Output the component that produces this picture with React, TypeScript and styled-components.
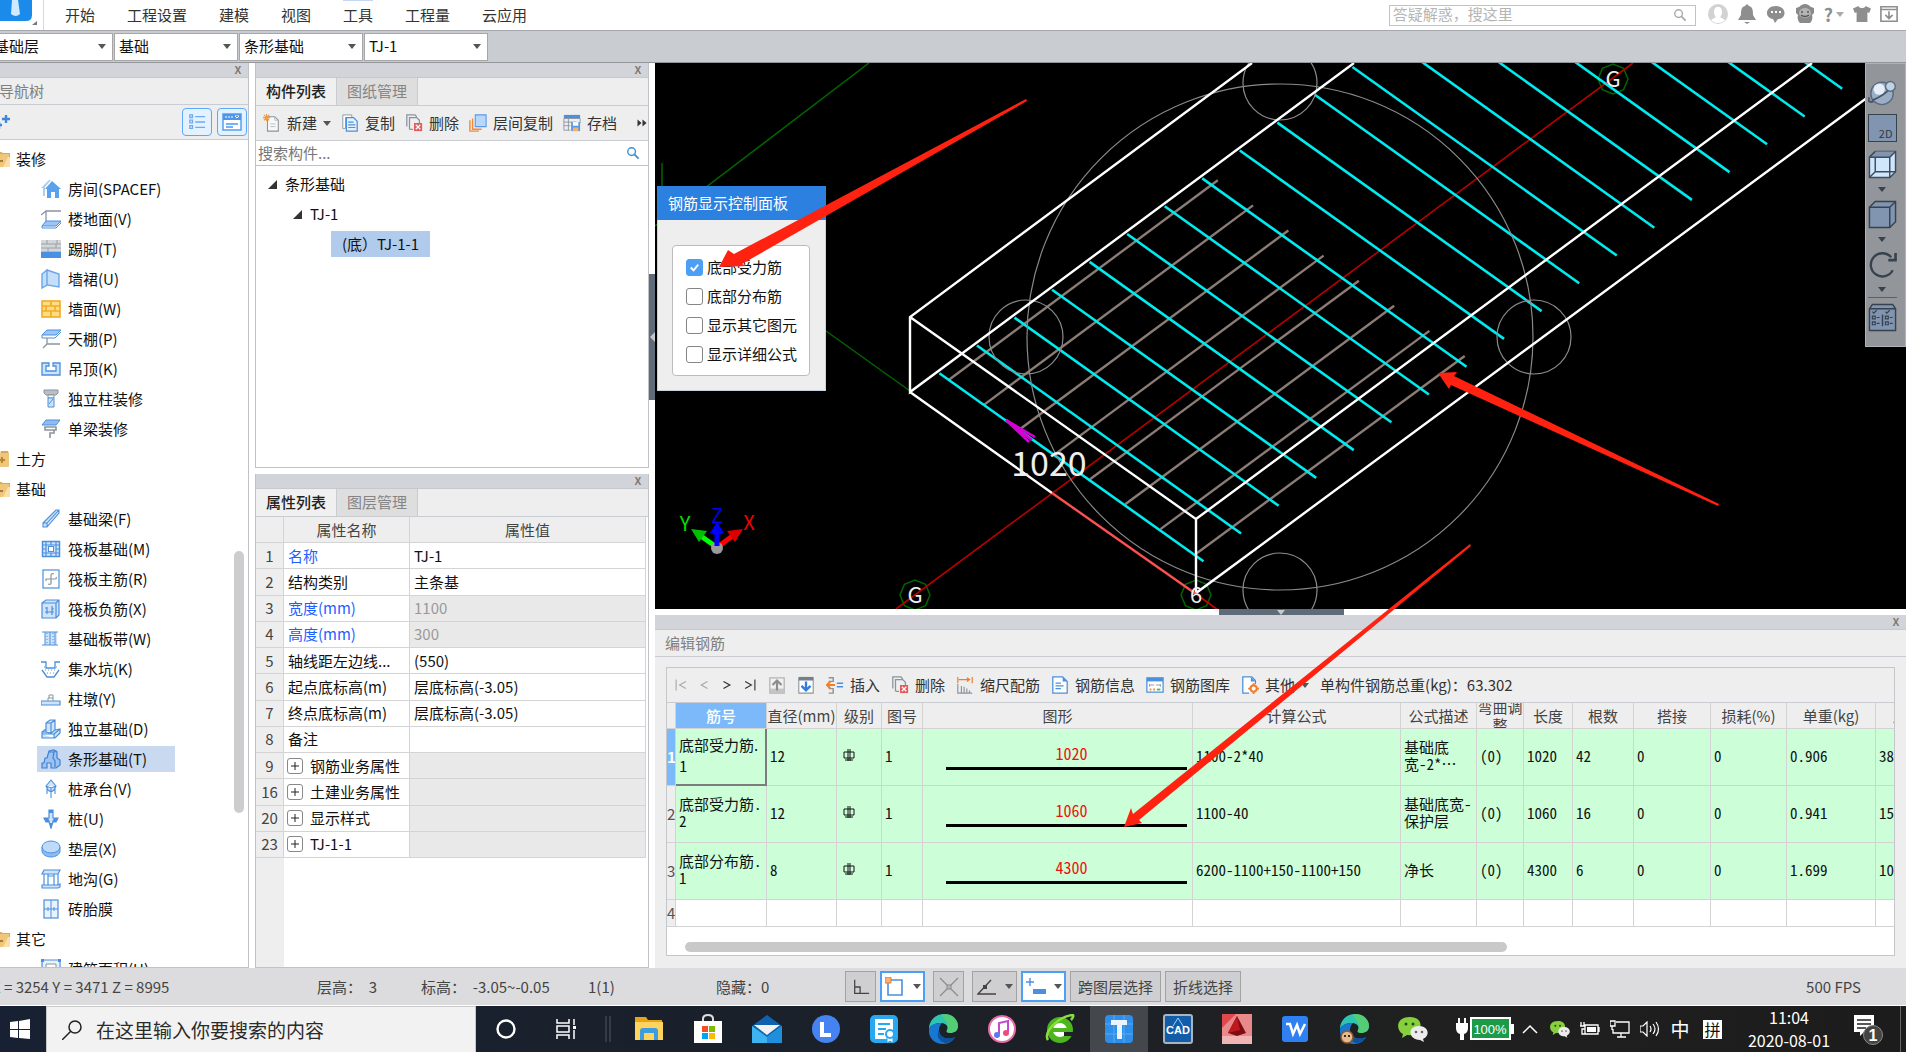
import React from "react";
import styled, { createGlobalStyle, css } from "styled-components";

const Global = createGlobalStyle`
  * { box-sizing: border-box; }
  html, body { margin: 0; padding: 0; }
  body {
    overflow: hidden;
    background: #fff;
    color: #111;
    font-family: "Noto Sans CJK SC", "Noto Sans", sans-serif;
    font-size: 15px;
    line-height: 20px;
  }
  button, input, select { font: inherit; color: inherit; margin: 0; }
  button { border: 0; padding: 0; background: none; }
  svg { display: block; flex: none; }
`;

/* ---------- icons ---------- */

const B = "#4a90dc";
const L = "#cfe3fa";
const G = "#8a949e";

const glyphs: Record<string, React.ReactNode> = {
  folderOpen: <><path d="M1 3h9l2 1h7v4H1z" fill="#d9a95a" /><path d="M1 18V5h17v13z" fill="#f0c67d" /><path d="M12 18l5-10h2v10z" fill="#fbdfa8" /><path d="M8 11h4v2H8z" fill="#a87a35" /></>,
  folderShut: <><path d="M10 2h7l1 3h-9z" fill="#d9a95a" /><rect x="1" y="4" width="17" height="14" rx="1" fill="#f0c67d" /><path d="M8 11h6M11 8v6" stroke="#b98431" strokeWidth="2" /></>,
  house: <><path d="M4 10l7-8 9 8h-2v9h-4v-6h-4v6H6v-9z" fill="#5ba2ee" /><path d="M0 9l8-8h2L4 8v9H2V9z" fill="#a9cdf6" /></>,
  floor: <><path d="M5 12V2h15M5 2L0 6" stroke={G} strokeWidth="1.3" fill="none" /><path d="M5 12h15l-5 5H1z" fill="#9cc6f5" stroke={B} /><path d="M1 17v2h14l5-5v-2" fill="none" stroke={B} /></>,
  skirting: <><rect y="1" width="20" height="13" fill="#d4d7d9" /><path d="M0 5h20M0 9h20M0 13h20M6 1v4M15 5v4M7 9v4M16 1v4" stroke="#9aa0a5" /><rect y="13" width="20" height="6" fill="#4a8fe2" /></>,
  dado: <path d="M1 5l5-4v15l-5 3zM6 1l12 4v13L6 16z" fill="#c5def9" stroke="#6aa6ea" strokeWidth="1.4" />,
  brick: <><rect x="1" y="2" width="18" height="16" fill="#ffdc86" stroke="#f4ab22" strokeWidth="1.6" /><path d="M1 7h18M1 12h18M10 2v5M5 7v5M14 7v5M10 12v6" stroke="#f4ab22" strokeWidth="1.6" /></>,
  canopy: <><path d="M6 1h14l-5 5H1z" fill="#9cc6f5" stroke={B} /><path d="M1 6v3h13l6-6" fill="none" stroke={B} /><path d="M6 9v6h13M6 15l-4 4" fill="none" stroke={G} strokeWidth="1.3" /></>,
  hanging: <path d="M1 4h7v3H5v5h10V7h-3V4h7v12H1z" fill={L} stroke={B} strokeWidth="1.3" />,
  column: <><path d="M3 1h14v3l-2 2H5L3 4z" fill="#b9bfc5" stroke={G} /><path d="M7 6h6v3H7z" fill="#fff" stroke={G} /><path d="M7 9h6v9H7z" fill={L} stroke={B} /><path d="M8 15l4-5" stroke={B} /></>,
  beam: <><path d="M5 1h14l-4 5H1z" fill="#8fbdf2" stroke={B} /><path d="M4 8h11v3H4zM13 11v3H9v5" fill="none" stroke={G} strokeWidth="1.6" /></>,
  foundBeam: <path d="M2 14L15 1h3v3L6 18H2zM2 14h4v4M6 14L18 1" fill={L} stroke={B} strokeWidth="1.1" />,
  raft: <><rect x="1.500" y="2.500" width="17" height="15" fill={L} stroke={B} strokeWidth="1.500" /><path d="M5 2v16M15 2v16M1 6h18M1 14h18M10 2v4M10 14v4M1 10h4M15 10h4" stroke={B} strokeWidth="1.200" /><rect x="7.500" y="7.500" width="5" height="5" fill="#fff" stroke={B} /></>,
  raftMain: <><rect x="2" y="1" width="16" height="18" fill="#fff" stroke={B} strokeWidth="1.200" /><path d="M10 15V6q0-2 3-1M5 12v-2h9q2 0 1-2M10 14q0 2-3 1" fill="none" stroke={G} strokeWidth="1.200" /></>,
  raftNeg: <><path d="M1 4h14v15H1zM1 4l4-3h13v15l-3 3M15 4l3-3" fill={L} stroke={B} strokeWidth="1.200" /><path d="M6 8v7M11 7v9M4 13h9M4 9h2M11 10h2" stroke={B} strokeWidth="1.200" /></>,
  strip: <><rect x="4" y="3" width="12" height="13" fill={L} /><path d="M1 3h16M1 16h16M4 3v13M14 3v13M9 3v13" stroke={B} /><path d="M6 4v12M12 4v12" stroke={B} strokeDasharray="1 2" /></>,
  sump: <><path d="M0 3h5v6h9V3h5" fill="none" stroke={B} strokeWidth="1.300" /><path d="M1 11l5 7h7l5-7" fill="none" stroke={B} strokeWidth="1.300" /><path d="M3 8h1M15 8h2M4 11h12M6 14h8" stroke={G} strokeDasharray="1 2" /></>,
  pier: <><path d="M0 12h19v4H0z" fill={L} stroke={B} strokeWidth="1.200" /><path d="M7 12V9h5v3M8 9V6h4v3" fill="none" stroke={G} /></>,
  isolated: <path d="M5 13V4l4-3h5v10l-4 3zM1 13h4v-3l-4 3v6h13l5-5v-4l-5 1M1 15h12v4M13 15l6-5M5 4h5v10M10 4l4-3" fill={L} stroke={B} strokeWidth="1.200" />,
  stripFound: <path d="M1 19v-5h2l1-5h2l2-7 5-1 3 2v6l3 2v5l-4 3h-5v-5H6v5zM8 3h5l-1 6 2 3v6M13 3l3-1" fill="#9cc3f2" stroke="#3f82d0" strokeWidth="1.200" />,
  pileCap: <path d="M10 1l5 6-2 4-3 2-3-2-2-4zM10 13v6M6 9v6M14 9v6M5 7l5 2 5-2M10 9v4" fill={L} stroke={B} strokeWidth="1.100" />,
  pile: <><path d="M8 1h4v8h5l-2 4h-3l-2 6-2-6H5L3 9h5z" fill={L} stroke={B} strokeWidth="1.200" /><path d="M3 9h4l2 4H5zM17 9h-4l-2 4h4zM8 1h4v3H8zM9 14h2v5H9z" fill={B} /></>,
  cushion: <><path d="M1 8v4c0 3 4 6 9 6s9-3 9-6V8" fill="#8ebcf1" stroke={B} /><ellipse cx="10" cy="8" rx="9" ry="6" fill="#bddaf8" stroke={B} /></>,
  trench: <path d="M3 1h16l-2 4H1zM3 5v11M7 5v11M13 5v11M17 5v11M1 16h16l2-1v3l-2 1H1zM7 7h6" fill={L} stroke={B} strokeWidth="1.200" />,
  brickForm: <><rect x="3" y="1" width="14" height="18" fill="#eaf3fd" stroke={B} strokeWidth="1.200" /><path d="M3 10h14M10 1v18M7 8v4M13 8v4" stroke={B} /></>,
  area: <><path d="M1 1h18v18H1z" fill="#eaf3fd" stroke={B} strokeWidth="1.200" /><path d="M5 5h10v12H5z" fill="#fff" stroke={G} /><path d="M0 0h3v3H0zM17 0h3v3h-3z" fill={B} /></>,
  sparkle: <path d="M15 3v8M11 7h8M8 10v7M5 13h6" stroke="#3f87dc" strokeWidth="2.400" />,
  listView: <path d="M2 2h3v3H2zM2 8h3v3H2zM2 14h3v3H2zM8 4h11M8 10h11M8 16h11" fill="none" stroke="#6babf3" strokeWidth="1.400" />,
  cardView: <><rect x="1" y="2" width="18" height="16" fill="#fff" stroke="#4a98ee" strokeWidth="1.400" /><path d="M1 2h18v6H1z" fill="#4a98ee" /><path d="M4 4v2M7 4v2M10 4v2M13 4h4l-2 2z" stroke="#fff" /><path d="M4 12h12M4 15h7" stroke="#4a98ee" strokeWidth="1.400" /></>,
  newDoc: <><path d="M5 3h8l4 4v12H5z" fill="#f8f8f8" stroke={G} strokeWidth="1.200" /><path d="M13 3v4h4M8 11h6M8 14h6" fill="none" stroke="#b8bec4" /><path d="M4 0v8M0 4h8M1 1l6 6M7 1L1 7" stroke="#f29a37" strokeWidth="1.300" /></>,
  copy: <><path d="M2 1h10v3H5v12H2z" fill="#fff" stroke={G} /><path d="M6 4h8l4 4v11H6z" fill="#e8f2fd" stroke={B} strokeWidth="1.400" /><path d="M8 9h6M8 12h8M8 15h8" stroke={B} strokeWidth="1.300" /></>,
  remove: <><path d="M2 14V1h9l2 2M5 17V4h8l3 3v3M5 17h4" fill="none" stroke={G} strokeWidth="1.400" /><path d="M10 10h9v9h-9z" fill="#e25a5a" /><path d="M12 12l5 5M17 12l-5 5" stroke="#fff" strokeWidth="1.400" /></>,
  layers: <><path d="M7 1h12v13H7z" fill="#b9d6fb" stroke="#5b9ae6" strokeWidth="1.200" /><path d="M4 5v12h10M1 7v12h10" fill="none" stroke="#f08a3c" strokeWidth="1.600" /></>,
  archive: <><path d="M1 1h18v4H1z" fill={B} /><path d="M1 5h18v5M1 5v13h7M6 5v13M1 9h14M1 13h7" fill="none" stroke={G} /><path d="M9 9h10v10H9z" fill="#5b9ae6" /><path d="M11 9h6v4h-6z" fill="#fff" /><path d="M11 15h6v4h-6z" fill="#f6b26b" /></>,
  search: <><circle cx="8" cy="8" r="5.500" fill="none" stroke="currentColor" strokeWidth="2" /><path d="M12 12l6 6" stroke="currentColor" strokeWidth="2.600" /></>,
  more: <path d="M1 3l8 7-8 7zM11 3l8 7-8 7z" fill="#333" />,
  first: <path d="M3 2v16M17 5l-9 5 9 5" fill="none" stroke="#a9a9a9" strokeWidth="1.600" />,
  prev: <path d="M15 5l-9 5 9 5" fill="none" stroke="#a9a9a9" strokeWidth="1.600" />,
  next: <path d="M5 5l9 5-9 5" fill="none" stroke="#333" strokeWidth="1.800" />,
  last: <path d="M17 2v16M3 5l9 5-9 5" fill="none" stroke="#333" strokeWidth="1.600" />,
  up: <><path d="M2 2h16v17H2z" fill="#f0f0f0" stroke="#b4b4b4" strokeWidth="1.400" /><path d="M2 14h16v5H2z" fill="#c4c4c4" /><path d="M10 16V6M5 10l5-5 5 5" fill="none" stroke="#8d8d8d" strokeWidth="2.400" /></>,
  down: <><path d="M2 2h16v17H2z" fill="#fff" stroke={G} strokeWidth="1.200" /><path d="M2 1h16v4H2z" fill="#747f89" /><path d="M10 6v10M5 11l5 5 5-5" fill="none" stroke="#2f7edb" strokeWidth="2.600" /></>,
  insert: <><path d="M3 2h5v4H3M3 14h5v5H3" fill="none" stroke={G} strokeWidth="1.600" /><path d="M1 10h9M5 6l-4 4 4 4" fill="none" stroke="#f07c2e" strokeWidth="2.200" /><path d="M12 8h7M12 12h7" stroke={B} strokeWidth="1.800" /></>,
  scale: <><path d="M2 1v7M18 1v7M3 4h12M12 2l3 2-3 2" fill="none" stroke="#f07c2e" strokeWidth="1.300" /><path d="M2 9v10h16M6 11v8M9 12v7M12 14v5M15 16v3" fill="none" stroke={G} strokeWidth="1.300" /></>,
  info: <><path d="M2 1h11l5 5v13H2z" fill="#fff" stroke={B} strokeWidth="1.400" /><path d="M13 1v5h5z" fill={B} /><path d="M5 8h6M5 11h9M5 14h6" stroke={B} strokeWidth="1.400" /></>,
  library: <><path d="M1 2h18v16H1z" fill="#fff" stroke={B} strokeWidth="1.400" /><path d="M1 2h18v4H1z" fill={B} /><path d="M4 12V9M4 10h5M11 10h5M16 9v3" stroke={G} /><path d="M4 15h2M8 15h2" stroke="#f08a3c" strokeWidth="2" /><path d="M12 15h4" stroke="#4cb46a" strokeWidth="2" /></>,
  other: <><path d="M9 19H2V1h10l4 4v4" fill="#fff" stroke={B} strokeWidth="1.400" /><path d="M11 1v5h5z" fill={B} /><circle cx="14" cy="14" r="3.500" fill="#fff" stroke="#f07c2e" strokeWidth="2.400" /><path d="M14 8v2M14 18v2M8 14h2M18 14h2" stroke="#f07c2e" strokeWidth="2" /></>,
  ortho: <path d="M3 2v15h16M3 10h6v7" fill="none" stroke="#444" strokeWidth="1.400" />,
  rectSel: <><path d="M3 3h14v15H3z" fill="#fff" stroke={B} strokeWidth="1.600" /><path d="M0 0h6v6H0z" fill="#f9b27a" stroke="#e9782a" /></>,
  cross: <><path d="M1 1l18 18M19 1L1 19" stroke="#8c8c8c" strokeWidth="1.200" /><path d="M8 8h4v4H8z" fill="#b5b5b5" stroke="#8c8c8c" /></>,
  angle: <><path d="M14 3L1 17h18" fill="none" stroke="#444" strokeWidth="1.400" /><path d="M6 8h4v4H6z" fill="#444" /></>,
  dyn: <><path d="M4 1v8M0 5h8" stroke={B} strokeWidth="1.400" /><path d="M7 12h13v5H7z" fill={B} /></>,
  user: <><circle cx="10" cy="10" r="10" fill="#d2d2d2" /><path d="M10 3c3 0 4 2 4 5s-1 4-2 5l5 3c-3 4-11 4-14 0l5-3c-1-1-2-2-2-5s1-5 4-5z" fill="#fff" /></>,
  bell: <path d="M10 0l2 2c4 1 4 5 4 9l3 5H1l3-5c0-4 0-8 4-9zM7 18h6l-3 2z" fill="#8e8e8e" />,
  chat: <><path d="M10 2c11 0 11 13 2 13l-3 4-2-4C-2 14-1 2 10 2z" fill="#8e8e8e" /><path d="M5 8h2M9 8h2M13 8h2" stroke="#fff" strokeWidth="2" /></>,
  face: <><path d="M4 3C8-1 12-1 16 3l3 1v5l-2 2c1 3 0 6-2 8H5c-2-2-3-5-2-8L1 9V4z" fill="#8a8a8a" /><ellipse cx="10" cy="9" rx="6" ry="5" fill="#b4b4b4" /><path d="M7 7v2M13 7v2M6 11q4 3 8 0" fill="none" stroke="#555" strokeWidth="1.500" /></>,
  shirt: <path d="M6 1c1 3 7 3 8 0l6 3-2 5-2-1v11H4V8L2 9 0 4z" fill="#8e8e8e" />,
  tray: <path d="M1 2h18v16H1zM1 5h18M10 7v8M6 11l4 4 4-4" fill="none" stroke="#8e8e8e" strokeWidth="1.800" />,
  orbit: <><path d="M1 14c-2 3 1 4 4 2" fill="none" stroke="#475569" strokeWidth="1.400" /><circle cx="10" cy="11" r="8" fill="#9aaec6" stroke="#5a6b80" /><ellipse cx="8" cy="8" rx="4" ry="4" fill="#e6eef8" /><path d="M3 16C8 14 13 11 16 7" fill="none" stroke="#475569" strokeWidth="1.300" /><circle cx="16" cy="6" r="3.500" fill="#c0d2e6" stroke="#5a6b80" /></>,
  cubeWire: <><path d="M1 5l4-4h14v14l-4 4H1z" fill="#cfe6fd" stroke="#3e4c5c" /><path d="M1 5l4-4h14l-4 4z" fill="#8195b0" /><path d="M1 5h14v14M15 5l4-4M5 5v10h14M5 15l-4 4M5 1L1 5" fill="none" stroke="#3e4c5c" /></>,
  cube: <><path d="M1 5l4-4h14v14l-4 4H1z" fill="#8195b0" stroke="#36424f" /><path d="M1 5h14v14M15 5l4-4" fill="none" stroke="#36424f" /></>,
  rotate: <><path d="M17 14a8 8 0 1 1-1-9" fill="none" stroke="#36424f" strokeWidth="1.600" /><path d="M19 2v5h-5" fill="none" stroke="#36424f" strokeWidth="1.800" /></>,
  viewList: <><path d="M1 4l2-3h14l2 3v15H1z" fill="#8195b0" stroke="#36424f" /><path d="M1 4h18M10 8v8" stroke="#36424f" /><path d="M3 6l1 1 2-2M12 6l1 1 2-2M3 9h2v2H3zM3 13h2v2H3zM12 9h2v2h-2zM12 13h2v2h-2zM6 10h2M6 14h2M15 10h2M15 14h2" fill="none" stroke="#36424f" strokeWidth=".8" /></>,
};

function Icon({ name, size = 20 }: { name: string; size?: number }) {
  return <svg width={size} height={size} viewBox="0 0 20 20" aria-hidden="true">{glyphs[name]}</svg>;
}

const Caret = ({ color = "#555" }: { color?: string }) => (
  <svg width="8" height="5" viewBox="0 0 8 5" aria-hidden="true"><path d="M0 0h8L4 5z" fill={color} /></svg>
);

/* ---------- shell ---------- */

const Shell = styled.div`
  position: relative;
  display: flex;
  flex-direction: column;
  height: 100vh;
  overflow: hidden;
`;

const MenuBar = styled.header`
  display: flex;
  align-items: center;
  height: 31px;
  padding-right: 8px;
  border-bottom: 1px solid #a4a7ab;
  background: #fff;
`;

const Brand = styled.div`
  display: flex;
  width: 44px;
  height: 30px;
  border-right: 1px solid #d8d8d8;
`;

const MenuLinks = styled.nav`
  display: flex;
  flex: 1;
  gap: 32px;
  align-self: stretch;
  padding-left: 21px;
`;

const MenuButton = styled.button<{ $current?: boolean }>`
  padding-bottom: 2px;
  color: #333;
  border-top: 1px solid ${(p) => (p.$current ? "#c5d6f0" : "transparent")};
`;

const HelpSearch = styled.label`
  display: flex;
  align-items: center;
  width: 307px;
  height: 21px;
  padding: 0 8px 0 3px;
  border: 1px solid #c2c2c2;
  color: #aaa;
  input {
    flex: 1;
    min-width: 0;
    padding: 0 0 2px;
    border: 0;
    outline: 0;
    background: none;
    &::placeholder { color: #b5b5b5; opacity: 1; }
  }
`;

const HeaderTools = styled.div`
  display: flex;
  align-items: center;
  gap: 9px;
  margin-left: 12px;
  padding-bottom: 2px;
`;

const HelpMark = styled.button`
  display: flex;
  align-items: center;
  gap: 3px;
  color: #8e8e8e;
  font-size: 18px;
  font-weight: 700;
`;

const Selectors = styled.div`
  display: flex;
  align-items: center;
  gap: 1px;
  height: 32px;
  margin-left: -11px;
  border-bottom: 1px solid #93969a;
  background: #c9ccd1;
`;

const Combo = styled.label`
  display: flex;
  align-items: center;
  width: 124px;
  height: 28px;
  padding-right: 6px;
  border: 1px solid #a6a6a6;
  background: #fff;
  select {
    flex: 1;
    min-width: 0;
    padding: 0 0 1px 4px;
    border: 0;
    appearance: none;
    outline: 0;
    background: none;
  }
`;

const Main = styled.main`
  display: grid;
  grid-template-columns: 249px 394px minmax(0, 1fr);
  gap: 6px;
  flex: 1;
  min-height: 0;
`;

const Column = styled.div`
  display: flex;
  flex-direction: column;
  gap: 6px;
  min-width: 0;
  min-height: 0;
`;

const Panel = styled.section<{ $grow?: boolean; $height?: number }>`
  display: flex;
  flex-direction: column;
  min-height: 0;
  ${(p) => (p.$grow ? "flex: 1;" : `flex: none; height: ${p.$height}px;`)}
  border: 1px solid #bfc2c6;
  border-top: 0;
  background: #fff;
`;

const Strip = styled.div`
  display: flex;
  flex: none;
  justify-content: flex-end;
  align-items: center;
  height: 15px;
  padding: 0 5px 2px 0;
  border-bottom: 1px solid #c6c8ce;
  background: #d3d4d9;
`;

const CloseButton = styled.button`
  width: 10px;
  color: #777;
  font-size: 13px;
  font-weight: 500;
  line-height: 12px;
`;

const PanelTitle = styled.h2`
  flex: none;
  height: 27px;
  margin: 0;
  padding: 0 10px;
  border-bottom: 1px solid #c9ccd0;
  background: #eee;
  color: #808080;
  font-size: 15px;
  font-weight: 400;
  line-height: 25px;
`;

/* ---------- navigation tree ---------- */

const NavPanel = styled(Panel)`
  margin-left: -12px;
`;

const NavTools = styled.div`
  display: flex;
  flex: none;
  align-items: center;
  gap: 5px;
  height: 35px;
  padding: 0 1px 0 2px;
  border-bottom: 1px solid #c9ccd0;
  background: #eee;
`;

const NavSpacer = styled.div`
  flex: 1;
`;

const ViewToggle = styled.button`
  display: grid;
  place-items: center;
  width: 30px;
  height: 28px;
  border: 1px solid #5ba8f8;
  border-radius: 4px;
  background: #e4f1fe;
`;

const NavBody = styled.div`
  display: flex;
  flex: 1;
  min-height: 0;
  overflow: hidden;
`;

const NavList = styled.ul`
  flex: 1;
  margin: 0;
  padding: 4px 0 0;
  list-style: none;
`;

const NavGroup = styled.li`
  display: flex;
  align-items: center;
  gap: 5px;
  height: 30px;
  padding-left: 2px;
`;

const NavItem = styled.li`
  display: flex;
  align-items: center;
  height: 30px;
  padding-left: 48px;
`;

const NavButton = styled.button<{ $selected?: boolean }>`
  display: flex;
  align-items: center;
  gap: 7px;
  height: 26px;
  padding: 0 4px;
  white-space: nowrap;
  ${(p) => p.$selected && css`
    width: 138px;
    background: #c9d9f0;
  `}
`;

const ScrollRail = styled.div`
  flex: none;
  width: 10px;
  margin: 411px 4px 0 0;
`;

const ScrollThumb = styled.div`
  height: 262px;
  border-radius: 5px;
  background: #cdcdcd;
`;

const nav: [string, string, boolean?][] = [
  ["folderOpen", "装修", true],
  ["house", "房间(SPACEF)"],
  ["floor", "楼地面(V)"],
  ["skirting", "踢脚(T)"],
  ["dado", "墙裙(U)"],
  ["brick", "墙面(W)"],
  ["canopy", "天棚(P)"],
  ["hanging", "吊顶(K)"],
  ["column", "独立柱装修"],
  ["beam", "单梁装修"],
  ["folderShut", "土方", true],
  ["folderOpen", "基础", true],
  ["foundBeam", "基础梁(F)"],
  ["raft", "筏板基础(M)"],
  ["raftMain", "筏板主筋(R)"],
  ["raftNeg", "筏板负筋(X)"],
  ["strip", "基础板带(W)"],
  ["sump", "集水坑(K)"],
  ["pier", "柱墩(Y)"],
  ["isolated", "独立基础(D)"],
  ["stripFound", "条形基础(T)"],
  ["pileCap", "桩承台(V)"],
  ["pile", "桩(U)"],
  ["cushion", "垫层(X)"],
  ["trench", "地沟(G)"],
  ["brickForm", "砖胎膜"],
  ["folderOpen", "其它", true],
  ["area", "建筑面积(U)"],
];

/* ---------- component list / properties ---------- */

const Tabs = styled.div`
  display: flex;
  flex: none;
  height: 28px;
  border-bottom: 1px solid #c9ccd0;
  background: #eee;
`;

const Tab = styled.button<{ $active?: boolean }>`
  width: 81px;
  padding-bottom: 1px;
  border-right: 1px solid #c9ccd0;
  background: ${(p) => (p.$active ? "#f0f0f0" : "#dedede")};
  color: ${(p) => (p.$active ? "#222" : "#858585")};
  font-weight: ${(p) => (p.$active ? 500 : 400)};
`;

const ToolRow = styled.div<{ $gap: number }>`
  display: flex;
  flex: none;
  align-items: center;
  gap: ${(p) => p.$gap}px;
  height: 35px;
  padding: 0 7px;
  border-bottom: 1px solid #c9ccd0;
  background: #eee;
  color: #333;
  white-space: nowrap;
`;

const ToolButton = styled.button`
  display: flex;
  align-items: center;
  gap: 6px;
`;

const StepGroup = styled.div`
  display: flex;
  gap: 9px;
`;

const FindRow = styled.label`
  display: flex;
  flex: none;
  align-items: center;
  height: 25px;
  padding: 0 8px 0 2px;
  border-bottom: 1px solid #bfc2c6;
  color: #3d8fd6;
  input {
    flex: 1;
    min-width: 0;
    padding: 0;
    border: 0;
    outline: 0;
    background: none;
    &::placeholder { color: #777; opacity: 1; }
  }
`;

const Tree = styled.ul`
  margin: 0;
  padding: 3px 0 0;
  list-style: none;
`;

const TreeRow = styled.li<{ $level: number }>`
  display: flex;
  align-items: center;
  gap: 8px;
  height: 30px;
  padding-left: ${(p) => 12 + p.$level * 25}px;
`;

const TreePick = styled.button`
  width: 99px;
  height: 26px;
  margin-left: 13px;
  background: #b1cbec;
`;

const Props = styled.table`
  flex: none;
  width: 390px;
  height: 341px;
  border-spacing: 0;
  table-layout: fixed;
  th, td {
    height: 26px;
    padding: 0 4px;
    border-right: 1px solid #d4d4d4;
    border-bottom: 1px solid #d4d4d4;
    font-weight: 400;
    line-height: 20px;
    text-align: left;
    white-space: nowrap;
    overflow: hidden;
  }
  thead th { background: #eee; color: #444; text-align: center; }
  tbody th { padding: 0; background: #eee; color: #444; text-align: center; }
`;

const PropName = styled.td<{ $link?: boolean }>`
  background: #fff;
  color: ${(p) => (p.$link ? "#1f5fff" : "#111")};
`;

const PropValue = styled.td<{ $tone?: "muted" | "group" }>`
  background: ${(p) => (p.$tone ? "#e9e9e9" : "#fff")};
  color: ${(p) => (p.$tone ? "#999" : "#111")};
`;

const GroupLabel = styled.span`
  display: flex;
  align-items: center;
  gap: 7px;
`;

const Expander = styled.button`
  display: grid;
  place-items: center;
  width: 16px;
  height: 16px;
  margin-left: -1px;
  border: 1px solid #888;
  border-radius: 3px;
  background: #fff;
`;

const PropsFill = styled.div`
  flex: 1;
  width: 28px;
  background: #eee;
`;

type PropRow = { n: number; name: string; value?: string; link?: boolean; muted?: boolean; group?: boolean };
const propRows: PropRow[] = [
  { n: 1, name: "名称", value: "TJ-1", link: true },
  { n: 2, name: "结构类别", value: "主条基" },
  { n: 3, name: "宽度(mm)", value: "1100", link: true, muted: true },
  { n: 4, name: "高度(mm)", value: "300", link: true, muted: true },
  { n: 5, name: "轴线距左边线...", value: "(550)" },
  { n: 6, name: "起点底标高(m)", value: "层底标高(-3.05)" },
  { n: 7, name: "终点底标高(m)", value: "层底标高(-3.05)" },
  { n: 8, name: "备注" },
  { n: 9, name: "钢筋业务属性", group: true },
  { n: 16, name: "土建业务属性", group: true },
  { n: 20, name: "显示样式", group: true },
  { n: 23, name: "TJ-1-1", group: true },
];

/* ---------- 3D view ---------- */

const View = styled.div`
  position: relative;
  flex: 1;
  min-height: 0;
  background: #000;
`;

const Scene = styled.svg`
  position: absolute;
  inset: 0;
  width: 100%;
  height: 100%;
`;

const SideHandle = styled.button`
  position: absolute;
  top: 211px;
  left: -6px;
  display: grid;
  place-items: center;
  width: 6px;
  height: 126px;
  background: #5f6b78;
`;

const BottomHandle = styled.button`
  position: absolute;
  bottom: -6px;
  left: 50%;
  display: grid;
  place-items: center;
  width: 125px;
  height: 6px;
  margin-left: -62px;
  background: #5f6b78;
`;

const ViewTools = styled.div`
  position: absolute;
  top: 0;
  right: 0;
  display: flex;
  flex-direction: column;
  align-items: center;
  gap: 8px;
  width: 41px;
  height: 284px;
  padding: 14px 7px 0 0;
  border: 1px solid #b0b2b5;
  background: #929599;
`;

const ViewButton = styled.button`
  display: flex;
  flex-direction: column;
  align-items: center;
  gap: 8px;
`;

const TwoD = styled.span`
  display: flex;
  justify-content: flex-end;
  align-items: flex-end;
  width: 29px;
  height: 28px;
  padding-right: 3px;
  border: 1px solid #36424f;
  background: #8195b0;
  color: #2f3944;
  font-size: 11px;
  line-height: 15px;
`;

const Rule = styled.hr`
  width: 29px;
  margin: -3px 0;
  border: 0;
  border-top: 1px solid #5d6063;
`;

const Dialog = styled.section`
  position: absolute;
  top: 123px;
  left: 2px;
  width: 169px;
  padding-bottom: 14px;
  border: 1px solid #c5d2df;
  border-top: 0;
  background: #eee;
`;

const DialogTitle = styled.h2`
  height: 34px;
  margin: 0 -1px 25px;
  padding-left: 11px;
  background: #2c80e0;
  color: #fff;
  font-size: 15px;
  font-weight: 400;
  line-height: 33px;
`;

const Checks = styled.div`
  display: flex;
  flex-direction: column;
  gap: 9px;
  margin: 0 15px 0 14px;
  padding: 11px 0 11px 13px;
  border: 1px solid #bcbcbc;
  border-radius: 4px;
  background: #fff;
`;

const Check = styled.label`
  display: flex;
  align-items: center;
  gap: 4px;
  height: 20px;
  white-space: nowrap;
  input {
    width: 17px;
    height: 17px;
    margin: 0;
    appearance: none;
    border: 1px solid #858585;
    border-radius: 3px;
    background: #fff;
  }
  input:checked {
    border-color: #4c9ff5;
    background: #4c9ff5 url("data:image/svg+xml,%3Csvg xmlns='http://www.w3.org/2000/svg' viewBox='0 0 16 16'%3E%3Cpath d='M4 8l3 3 5-6' fill='none' stroke='white' stroke-width='2'/%3E%3C/svg%3E") center / 100%;
  }
`;

const mainBars = Array.from({ length: 18 }, (_, k) => k);
const crossBars = Array.from({ length: 8 }, (_, j) => j);

function octagon(cx: number, cy: number, r: number) {
  return Array.from({ length: 8 }, (_, i) => {
    const a = (i * Math.PI) / 4 + Math.PI / 2;
    return `${(cx + r * Math.cos(a)).toFixed(1)},${(cy + r * Math.sin(a)).toFixed(1)}`;
  }).join(" ");
}

function Model() {
  return (
    <Scene viewBox="655 63 1251 546" preserveAspectRatio="xMidYMid slice">
      <g stroke="#006400" fill="none" strokeWidth="1.500">
        <path d="M869 63L655 226M662 163v24M826 331L910 391" />
        <polygon points={octagon(1613, 79, 15)} />
        <polygon points={octagon(915, 595, 15)} />
        <polygon points={octagon(1196, 595, 15)} />
      </g>
      <g stroke="#8b7c76" strokeWidth="2.400">
        {crossBars.map((j) => (
          <line key={j} x1={949 + 35.25 * j} y1={379.7 + 24.9 * j} x2={1217.8 + 35.27 * j} y2={180.3 + 25.1 * j} />
        ))}
      </g>
      <path d="M896 609L1633 63" stroke="#b80000" strokeWidth="1.600" />
      <g stroke="#00eaf0" strokeWidth="2.600">
        {mainBars.map((k) => (
          <line key={k} x1={939.4 + 37.55 * k} y1={373.3 - 27.85 * k} x2={1203.5 + 37.57 * k} y2={561.3 - 27.8 * k} />
        ))}
      </g>
      <g stroke="#8a8a8a" fill="none" strokeWidth="1.200">
        <circle cx="1280" cy="337" r="253" />
        <circle cx="1026" cy="337" r="37" />
        <circle cx="1534" cy="337" r="37" />
        <circle cx="1280" cy="83" r="37" />
        <circle cx="1280" cy="590" r="37" />
      </g>
      <path d="M1252 63L910 317V392L1354 63M910 317L1196 519V593L1906 69M1196 519L1812 63M910 392L1052 493" fill="none" stroke="#fff" strokeWidth="2.400" />
      <path d="M1052 493L1196 594" stroke="#ff5050" strokeWidth="2.400" />
      <path d="M1196 594L1218 610" stroke="#d00000" strokeWidth="1.600" />
      <path d="M1006 420L1035 437M1006 420L1029 442M1006 420L1032 440" stroke="#d400d4" strokeWidth="2.500" />
      <g fill="#eee" fontFamily='"Noto Sans CJK SC", sans-serif' textAnchor="middle">
        <text x="1049" y="476" fontSize="34">1020</text>
        <text x="1613" y="87" fontSize="22">G</text>
        <text x="915" y="603" fontSize="22">G</text>
        <text x="1196" y="603" fontSize="22">6</text>
      </g>
      <g fontFamily='"Noto Sans CJK SC", sans-serif' fontSize="20" textAnchor="middle">
        <text x="685" y="531" fill="#00e000">Y</text>
        <text x="717" y="523" fill="#0000e8">Z</text>
        <text x="749" y="530" fill="#f00000">X</text>
      </g>
      <path d="M715 546L698 534" stroke="#00ff00" strokeWidth="5" /><path d="M691 529l16 2-8 11z" fill="#00c000" />
      <path d="M719 546L735 534" stroke="#ff0000" strokeWidth="5" /><path d="M743 529l-16 2 8 11z" fill="#d80000" />
      <circle cx="717" cy="548" r="6" fill="#9a9a9a" />
      <path d="M717 546V532" stroke="#0000ff" strokeWidth="5" /><path d="M717 522l7 11q-7 4-14 0z" fill="#0000ff" />
    </Scene>
  );
}

/* ---------- rebar editor ---------- */

const Editor = styled.section`
  display: flex;
  flex: none;
  flex-direction: column;
  height: 353px;
  background: #eee;
`;

const EditorBox = styled.div`
  display: flex;
  flex: 1;
  flex-direction: column;
  min-height: 0;
  margin: 10px 11px 12px;
  border: 1px solid #c4c7ca;
  background: #fff;
  overflow: hidden;
`;

const TableClip = styled.div`
  flex: none;
  overflow: hidden;
`;

const Grid = styled.table`
  width: 1300px;
  border-spacing: 0;
  table-layout: fixed;
  th, td {
    height: 57px;
    padding: 0 3px;
    border-right: 1px solid #d3d3d3;
    border-bottom: 1px solid #d3d3d3;
    font-weight: 400;
    text-align: left;
    overflow: hidden;
  }
  td { padding-bottom: 4px; background: #ccffd8; font-feature-settings: "hwid"; line-height: 17px; }
  tbody th { padding: 0; background: #eee; color: #555; text-align: center; }
  tbody tr:last-child th, tbody tr:last-child td { height: 27px; }
  tbody tr:last-child td { background: #fff; }
  thead th { height: 26px; padding: 0; background: #eee; color: #444; text-align: center; }
  thead th:nth-child(2) { background: #7cb9fb; color: #fff; font-weight: 500; }
  tbody tr:first-child th { background: #7cb9fb; color: #fff; font-weight: 700; }
  tbody tr:first-child td:nth-child(2) {
    border-right: 2px solid #7c7c7c;
    border-bottom: 2px solid #7c7c7c;
    font-feature-settings: normal;
    line-height: 21px;
  }
`;

const HeadText = styled.div`
  display: flex;
  align-items: center;
  justify-content: center;
  height: 25px;
  line-height: 18px;
  overflow: hidden;
`;

const Shape = styled.div`
  width: 241px;
  margin: 4px 0 0 20px;
  padding: 0 0 4px 10px;
  border-bottom: 3px solid #000;
  color: #f01010;
  font-size: 16px;
  line-height: 19px;
  text-align: center;
`;

const HScroll = styled.div`
  flex: 1;
  padding: 15px 18px 0;
`;

const HThumb = styled.div`
  width: 69%;
  height: 10px;
  border-radius: 5px;
  background: #c9c9c9;
`;

const widths = [9, 91, 70, 45, 41, 270, 208, 76, 47, 49, 61, 77, 76, 89, 91];
const heads = ["", "筋号", "直径(mm)", "级别", "图号", "图形", "计算公式", "公式描述", "弯曲调整", "长度", "根数", "搭接", "损耗(%)", "单重(kg)", "总重(kg)"];
type Bar = { name: string[]; d: string; shape: string; formula: string; note: string[]; count: string; unit: string; total: string };
const bars: Bar[] = [
  { name: ["底部受力筋.", "1"], d: "12", shape: "1020", formula: "1100-2*40", note: ["基础底", "宽-2*…"], count: "42", unit: "0.906", total: "38.052" },
  { name: ["底部受力筋.", "2"], d: "12", shape: "1060", formula: "1100-40", note: ["基础底宽-", "保护层"], count: "16", unit: "0.941", total: "15.056" },
  { name: ["底部分布筋.", "1"], d: "8", shape: "4300", formula: "6200-1100+150-1100+150", note: ["净长"], count: "6", unit: "1.699", total: "10.194" },
];

const GradeMark = () => (
  <svg width="18" height="14" viewBox="0 0 18 14" role="img" aria-label="HRB400">
    <path d="M4 4h10v6H4zM8 1v12M10 1v12M5 12h8" fill="none" stroke="#111" />
  </svg>
);

const lines = (parts: string[]) => parts.map((t, i) => <React.Fragment key={i}>{i > 0 && <br />}{t}</React.Fragment>);

/* ---------- status bar ---------- */

const Status = styled.footer`
  display: grid;
  grid-template-columns: 317px 104px 167px 128px 129px auto 1fr auto;
  align-items: center;
  flex: none;
  height: 38px;
  padding-right: 45px;
  border-bottom: 1px solid #fff;
  background: #dcdcde;
  color: #444;
  white-space: pre;
`;

const Coords = styled.span`
  margin-left: -8px;
`;

const SnapBar = styled.div`
  display: flex;
  gap: 4px;
`;

const SnapButton = styled.button<{ $w: number; $on?: boolean; $apart?: boolean }>`
  display: flex;
  align-items: center;
  justify-content: center;
  gap: 8px;
  width: ${(p) => p.$w}px;
  height: 31px;
  margin: 0 ${(p) => (p.$apart ? 4 : 0)}px;
  border: ${(p) => (p.$on ? "2px solid #4ba0f4" : "1px solid #a2a2a2")};
  background: ${(p) => (p.$on ? "#fff" : "#cfcfd1")};
`;

/* ---------- taskbar ---------- */

const Taskbar = styled.div`
  display: flex;
  flex: none;
  height: 46px;
  background: linear-gradient(90deg, #182133, #1b2029 45%, #202020 75%, #1c1c1c);
  color: #fff;
`;

const TaskButton = styled.button<{ $w: number }>`
  display: grid;
  place-items: center;
  flex: none;
  width: ${(p) => p.$w}px;
`;

const TaskSearch = styled.label`
  display: flex;
  align-items: center;
  gap: 14px;
  flex: none;
  width: 430px;
  padding-left: 15px;
  border: 1px solid #c8c8c8;
  border-bottom: 0;
  background: #f2f2f2;
  color: #222;
  input {
    flex: 1;
    min-width: 0;
    padding: 0;
    border: 0;
    outline: 0;
    background: none;
    font-size: 19px;
    &::placeholder { color: #2b2b2b; opacity: 1; }
  }
`;

const Pinned = styled.div`
  display: flex;
  flex: 1;
  max-width: 822px;
`;

const AppButton = styled.button<{ $active?: boolean }>`
  display: grid;
  flex: 1;
  place-items: center;
  background: ${(p) => (p.$active ? "#44474c" : "none")};
`;

const Tray = styled.div`
  display: flex;
  margin-left: auto;
`;

const Clock = styled.time`
  width: 118px;
  font-size: 16px;
  line-height: 23px;
  text-align: center;
`;

const Ime = styled.span`
  font-size: 19px;
`;

const Pinyin = styled.span`
  width: 19px;
  height: 19px;
  background: #fff;
  color: #111;
  font-size: 16px;
  line-height: 18px;
`;

const ShowDesktop = styled.button`
  width: 18px;
  background: linear-gradient(90deg, transparent 12px, #666 12px, #666 13px, transparent 13px);
`;

const edge = (
  <>
    <path d="M1 15C1 6 8 0 16 0c9 0 14 6 14 12 0 5-4 7-8 7-3 0-4-1-3-3 2-3-1-7-6-7C7 9 2 12 1 15z" fill="#2fc4b2" />
    <path d="M16 0c9 0 14 6 14 12 0 5-4 7-8 7-3 0-4-1-3-3 2-4 0-10-6-15z" fill="#63d35c" opacity=".7" />
    <path d="M1 15C0 24 7 30 15 30c6 0 10-3 12-7-8 4-16 0-16-7 0-3 1-5 3-7C7 9 2 11 1 15z" fill="#1878d0" />
    <path d="M11 16c0 7 8 11 16 7-3 4-6 6-10 6-7-2-9-8-6-13z" fill="#0c529e" />
  </>
);

const wechat = (
  <>
    <path d="M12 3C-3 3-2 17 5 20l-1 4 5-3c16 2 19-18 3-18z" fill="#86d03e" />
    <circle cx="8" cy="10" r="1.500" fill="#284a12" /><circle cx="15" cy="10" r="1.500" fill="#284a12" />
    <path d="M21 12c-12 0-11 14 1 14l4 2-1-3c8-4 5-13-4-13z" fill="#ececec" />
    <circle cx="18" cy="18" r="1.300" fill="#666" /><circle cx="24" cy="18" r="1.300" fill="#666" />
  </>
);

const label = (t: string, size: number, y: number, fill = "#fff") => (
  <text x="15" y={y} fontSize={size} fill={fill} textAnchor="middle" fontWeight="700" fontFamily='"Liberation Sans", sans-serif'>{t}</text>
);

const apps: [string, React.ReactNode][] = [
  ["文件资源管理器", <><path d="M1 3h11l2 3h14v6H1z" fill="#e8a317" /><path d="M1 8h28v18H1z" fill="#ffd45e" /><path d="M6 26v-9q0-3 3-3h12q3 0 3 3v9h-4v-7H10v7z" fill="#3d9be0" /></>],
  ["应用商店", <><path d="M10 8V5q0-4 5-4t5 4v3" fill="none" stroke="#ddd" strokeWidth="2" /><path d="M1 7h28v22H1z" fill="#fff" /><path d="M9 12h6v6H9z" fill="#f25022" /><path d="M16 12h6v6h-6z" fill="#7fba00" /><path d="M9 19h6v6H9z" fill="#00a4ef" /><path d="M16 19h6v6h-6z" fill="#ffb900" /></>],
  ["邮件", <><path d="M0 12L15 1l15 11v17H0z" fill="#0f62b0" /><path d="M0 12v17h30V12L15 23z" fill="#3db4f0" /><path d="M15 23l15-11v17H15z" fill="#1f8fdc" /><path d="M2 11h26L15 21z" fill="#f2f2f2" /></>],
  ["L", <><circle cx="15" cy="15" r="14" fill="#4583f2" /><path d="M11 8v13h9" fill="none" stroke="#fff" strokeWidth="4" /></>],
  ["文档", <><rect x="1" y="1" width="28" height="28" rx="5" fill="#27a8f0" /><path d="M6 5h18v20H6z" fill="#fff" /><path d="M9 10h12M9 15h8M9 20h6" stroke="#27a8f0" strokeWidth="2" /><path d="M18 22h6v7l-3-2-3 2z" fill="#fff" stroke="#27a8f0" /><circle cx="21" cy="20" r="4" fill="#fff" stroke="#27a8f0" strokeWidth="2" /></>],
  ["Edge", edge],
  ["音乐", <><circle cx="15" cy="15" r="13" fill="#fff" stroke="#e86aa8" strokeWidth="2" /><path d="M12 20V9l9-2v11" fill="none" stroke="#c44ad0" strokeWidth="2" /><circle cx="10" cy="21" r="3" fill="#5a7bf0" /><circle cx="19" cy="19" r="3" fill="#f04a78" /></>],
  ["浏览器", <><circle cx="15" cy="16" r="10" fill="#fff" stroke="#4db61e" strokeWidth="6" /><path d="M8 16h15" stroke="#4db61e" strokeWidth="4" /><path d="M19 18h10v4H19z" fill="#1e2126" /><path d="M3 26C-2 18 14 2 28 1q1 2-2 5" fill="none" stroke="#8bdc3c" strokeWidth="2.500" /></>],
  ["土建计量", <><rect x="1" y="1" width="28" height="28" rx="4" fill="#2f8ee8" /><path d="M1 10h28M1 20h28M10 1v28M20 1v28" stroke="#5aaaf2" /><path d="M7 6h16v5h-5v14h-5V11H7z" fill="#eaf4ff" /></>],
  ["CAD", <><rect x="1" y="1" width="28" height="28" rx="2" fill="#135ca8" stroke="#a8b4c0" strokeWidth="2" />{label("CAD", 11, 20)}<path d="M15 4l-5 8M15 4l5 8" stroke="#9cd0ff" /></>],
  ["AutoCAD", <><rect width="30" height="30" fill="#e0484c" /><path d="M0 30V14L14 0h16v30z" fill="#e88a8c" /><path d="M0 22h30v8H0z" fill="#f0b4b4" /><path d="M15 2l9 17-9 3-9-3z" fill="#7e0c12" /><path d="M15 2l3 14-12 3z" fill="#c01820" /></>],
  ["WPS", <><rect x="2" y="2" width="26" height="26" rx="3" fill="#2f80f0" /><path d="M6 10h4l3 10 4-9 3 9 5-10" fill="none" stroke="#fff" strokeWidth="2.500" /></>],
  ["Edge 用户", <>{edge}<circle cx="8" cy="23" r="6" fill="#e8b98a" stroke="#8a5a30" strokeWidth="1.500" /><circle cx="6" cy="22" r="1" /><circle cx="10" cy="22" r="1" /></>],
  ["微信", wechat],
];

/* ---------- marker arrows drawn over the whole window ---------- */

const Markers = styled.svg`
  position: absolute;
  inset: 0;
  width: 100%;
  height: 100%;
  pointer-events: none;
`;

export default function App() {
  return (
    <Shell>
      <Global />
      <MenuBar>
        <Brand>
          <svg width="42" height="30" viewBox="0 0 42 30" aria-hidden="true">
            <path d="M0 0h32v15q0 6-6 6H0z" fill="#1a8bea" />
            <path d="M12 0h6l2 14q-4 4-9 0z" fill="#cfe9ff" />
            <path d="M37 21v4h-5z" fill="#777" />
          </svg>
        </Brand>
        <MenuLinks>
          {["开始", "工程设置", "建模", "视图", "工具", "工程量", "云应用"].map((m) => (
            <MenuButton key={m} $current={m === "工具"}>{m}</MenuButton>
          ))}
        </MenuLinks>
        <HelpSearch>
          <input placeholder="答疑解惑，搜这里" aria-label="答疑解惑" />
          <Icon name="search" size={14} />
        </HelpSearch>
        <HeaderTools>
          {["user", "bell", "chat", "face"].map((n, i) => (
            <button key={n} aria-label={["用户", "通知", "消息", "客服"][i]}><Icon name={n} /></button>
          ))}
          <HelpMark>?<Caret color="#aaa" /></HelpMark>
          <button aria-label="皮肤"><Icon name="shirt" size={18} /></button>
          <button aria-label="收起"><Icon name="tray" size={18} /></button>
        </HeaderTools>
      </MenuBar>

      <Selectors>
        {["基础层", "基础", "条形基础", "TJ-1"].map((v) => (
          <Combo key={v}>
            <select aria-label={v} defaultValue={v}><option>{v}</option></select>
            <Caret />
          </Combo>
        ))}
      </Selectors>

      <Main>
        <NavPanel $grow>
          <Strip><CloseButton aria-label="关闭">x</CloseButton></Strip>
          <PanelTitle>导航树</PanelTitle>
          <NavTools>
            <button aria-label="添加"><Icon name="sparkle" /></button>
            <NavSpacer />
            <ViewToggle aria-label="列表"><Icon name="listView" size={18} /></ViewToggle>
            <ViewToggle aria-label="卡片"><Icon name="cardView" /></ViewToggle>
          </NavTools>
          <NavBody>
            <NavList>
              {nav.map(([icon, text, group]) =>
                group ? (
                  <NavGroup key={text}><Icon name={icon} />{text}</NavGroup>
                ) : (
                  <NavItem key={text}>
                    <NavButton $selected={icon === "stripFound"}><Icon name={icon} />{text}</NavButton>
                  </NavItem>
                )
              )}
            </NavList>
            <ScrollRail><ScrollThumb /></ScrollRail>
          </NavBody>
        </NavPanel>

        <Column>
          <Panel $height={405}>
            <Strip><CloseButton aria-label="关闭">x</CloseButton></Strip>
            <Tabs><Tab $active>构件列表</Tab><Tab>图纸管理</Tab></Tabs>
            <ToolRow $gap={10}>
              <ToolButton><Icon name="newDoc" size={18} />新建<Caret /></ToolButton>
              <ToolButton><Icon name="copy" size={18} />复制</ToolButton>
              <ToolButton><Icon name="remove" size={18} />删除</ToolButton>
              <ToolButton><Icon name="layers" size={18} />层间复制</ToolButton>
              <ToolButton><Icon name="archive" size={18} />存档</ToolButton>
              <NavSpacer />
              <button aria-label="更多"><Icon name="more" size={10} /></button>
            </ToolRow>
            <FindRow>
              <input placeholder="搜索构件..." aria-label="搜索构件" />
              <Icon name="search" size={14} />
            </FindRow>
            <Tree>
              <TreeRow $level={0}><svg width="9" height="9" viewBox="0 0 9 9"><path d="M9 0v9H0z" fill="#333" /></svg>条形基础</TreeRow>
              <TreeRow $level={1}><svg width="9" height="9" viewBox="0 0 9 9"><path d="M9 0v9H0z" fill="#333" /></svg>TJ-1</TreeRow>
              <TreeRow $level={2}><TreePick>(底）TJ-1-1</TreePick></TreeRow>
            </Tree>
          </Panel>

          <Panel $grow>
            <Strip><CloseButton aria-label="关闭">x</CloseButton></Strip>
            <Tabs><Tab $active>属性列表</Tab><Tab>图层管理</Tab></Tabs>
            <Props>
              <colgroup><col width="28" /><col width="126" /><col width="236" /></colgroup>
              <thead><tr><th /><th>属性名称</th><th>属性值</th></tr></thead>
              <tbody>
                {propRows.map((r) => (
                  <tr key={r.n}>
                    <th>{r.n}</th>
                    <PropName $link={r.link}>
                      {r.group ? (
                        <GroupLabel>
                          <Expander aria-label={`展开${r.name}`}><svg width="8" height="8" viewBox="0 0 8 8"><path d="M4 0v8M0 4h8" stroke="#222" /></svg></Expander>
                          {r.name}
                        </GroupLabel>
                      ) : r.name}
                    </PropName>
                    <PropValue $tone={r.muted ? "muted" : r.group ? "group" : undefined}>{r.value}</PropValue>
                  </tr>
                ))}
              </tbody>
            </Props>
            <PropsFill />
          </Panel>
        </Column>

        <Column>
          <View>
            <Model />
            <SideHandle aria-label="收起侧栏"><svg width="5" height="10" viewBox="0 0 5 10"><path d="M5 0v10L0 5z" fill="#c4c9ce" /></svg></SideHandle>
            <BottomHandle aria-label="收起下栏"><Caret color="#c4c9ce" /></BottomHandle>
            <Dialog>
              <DialogTitle>钢筋显示控制面板</DialogTitle>
              <Checks>
                {["底部受力筋", "底部分布筋", "显示其它图元", "显示详细公式"].map((t, i) => (
                  <Check key={t}><input type="checkbox" defaultChecked={i === 0} />{t}</Check>
                ))}
              </Checks>
            </Dialog>
            <ViewTools>
              <ViewButton aria-label="动态观察"><Icon name="orbit" size={28} /></ViewButton>
              <ViewButton><TwoD>2D</TwoD></ViewButton>
              <ViewButton aria-label="线框"><Icon name="cubeWire" size={29} /><Caret color="#36424f" /></ViewButton>
              <ViewButton aria-label="实体"><Icon name="cube" size={29} /><Caret color="#36424f" /></ViewButton>
              <ViewButton aria-label="旋转"><Icon name="rotate" size={29} /><Caret color="#36424f" /></ViewButton>
              <Rule />
              <ViewButton aria-label="显示设置"><Icon name="viewList" size={29} /></ViewButton>
            </ViewTools>
          </View>

          <Editor>
            <Strip><CloseButton aria-label="关闭">x</CloseButton></Strip>
            <PanelTitle>编辑钢筋</PanelTitle>
            <EditorBox>
              <ToolRow $gap={11}>
                <StepGroup>
                  {["first", "prev", "next", "last"].map((n, i) => (
                    <button key={n} aria-label={["首条", "上一条", "下一条", "末条"][i]}><Icon name={n} size={14} /></button>
                  ))}
                </StepGroup>
                <button aria-label="上移"><Icon name="up" size={18} /></button>
                <button aria-label="下移"><Icon name="down" size={18} /></button>
                <ToolButton><Icon name="insert" size={18} />插入</ToolButton>
                <ToolButton><Icon name="remove" size={18} />删除</ToolButton>
                <ToolButton><Icon name="scale" size={18} />缩尺配筋</ToolButton>
                <ToolButton><Icon name="info" size={18} />钢筋信息</ToolButton>
                <ToolButton><Icon name="library" size={18} />钢筋图库</ToolButton>
                <ToolButton><Icon name="other" size={18} />其他<Caret /></ToolButton>
                <span>单构件钢筋总重(kg)：63.302</span>
              </ToolRow>
              <TableClip>
                <Grid>
                  <colgroup>{widths.map((w, i) => <col key={i} width={w} />)}</colgroup>
                  <thead><tr>{heads.map((h, i) => <th key={i}><HeadText>{h}</HeadText></th>)}</tr></thead>
                  <tbody>
                    {bars.map((b, i) => (
                      <tr key={i}>
                        <th>{i + 1}</th>
                        <td>{lines(b.name)}</td>
                        <td>{b.d}</td>
                        <td><GradeMark /></td>
                        <td>1</td>
                        <td><Shape>{b.shape}</Shape></td>
                        <td>{b.formula}</td>
                        <td>{lines(b.note)}</td>
                        <td>(0)</td>
                        <td>{b.shape}</td>
                        <td>{b.count}</td>
                        <td>0</td>
                        <td>0</td>
                        <td>{b.unit}</td>
                        <td>{b.total}</td>
                      </tr>
                    ))}
                    <tr><th>4</th>{heads.slice(1).map((h) => <td key={h} />)}</tr>
                  </tbody>
                </Grid>
              </TableClip>
              <HScroll><HThumb /></HScroll>
            </EditorBox>
          </Editor>
        </Column>
      </Main>

      <Status>
        <Coords>X = 3254 Y = 3471 Z = 8995</Coords>
        <span>层高：  3</span>
        <span>标高：  -3.05~-0.05</span>
        <span>1(1)</span>
        <span>隐藏：0</span>
        <SnapBar>
          <SnapButton $w={31} aria-label="正交"><Icon name="ortho" size={18} /></SnapButton>
          <SnapButton $w={45} $on aria-label="矩形选择"><Icon name="rectSel" /><Caret /></SnapButton>
          <SnapButton $w={31} $apart aria-label="交点"><Icon name="cross" /></SnapButton>
          <SnapButton $w={45} aria-label="角度"><Icon name="angle" /><Caret /></SnapButton>
          <SnapButton $w={45} $on aria-label="动态输入"><Icon name="dyn" /><Caret /></SnapButton>
          <SnapButton $w={91}>跨图层选择</SnapButton>
          <SnapButton $w={76}>折线选择</SnapButton>
        </SnapBar>
        <span />
        <span>500 FPS</span>
      </Status>

      <Taskbar>
        <TaskButton $w={46} aria-label="开始菜单">
          <svg width="26" height="20" viewBox="0 0 26 20"><path d="M0 3l8-1v8H0zM9 2l11-2v10H9zM0 11h8v8l-8-1zM9 11h11v9L9 19z" fill="#fff" /></svg>
        </TaskButton>
        <TaskSearch>
          <svg width="20" height="20" viewBox="0 0 20 20"><circle cx="13" cy="7" r="6" fill="none" stroke="#222" strokeWidth="1.500" /><path d="M9 11l-9 9" stroke="#222" strokeWidth="1.500" /></svg>
          <input placeholder="在这里输入你要搜索的内容" aria-label="搜索" />
        </TaskSearch>
        <TaskButton $w={60} aria-label="Cortana">
          <svg width="22" height="22" viewBox="0 0 22 22"><circle cx="11" cy="11" r="8.500" fill="none" stroke="#fff" strokeWidth="2.400" /></svg>
        </TaskButton>
        <TaskButton $w={60} aria-label="任务视图">
          <svg width="22" height="22" viewBox="0 0 22 22"><path d="M2 1v4h12V1M2 21v-4h12v4M2 8h12v6H2zM19 1v6M19 12v9" fill="none" stroke="#fff" strokeWidth="1.500" /><path d="M18 8h3v3h-3z" fill="#fff" /></svg>
        </TaskButton>
        <TaskButton $w={24} as="div">
          <svg width="6" height="26" viewBox="0 0 6 26"><path d="M1 0v26M5 0v26" stroke="#515965" /></svg>
        </TaskButton>
        <Pinned>
          {apps.map(([name, art]) => (
            <AppButton key={name} aria-label={name} $active={name === "土建计量"}>
              <svg width="30" height="30" viewBox="0 0 30 30">{art}</svg>
            </AppButton>
          ))}
        </Pinned>
        <Tray>
          <TaskButton $w={60} aria-label="电量">
            <svg width="58" height="24" viewBox="0 0 58 24">
              <path d="M3 1v6M9 1v6" stroke="#fff" strokeWidth="2" /><path d="M0 6h12v5q0 5-4 6v6H4v-6q-4-1-4-6z" fill="#fff" />
              <rect x="15" y="1" width="39" height="21" fill="#1d9a48" stroke="#fff" strokeWidth="2" /><path d="M55 7h3v10h-3z" fill="#fff" />
              <text x="34" y="17" fontSize="13" fill="#fff" textAnchor="middle" fontFamily='"Liberation Sans", sans-serif'>100%</text>
            </svg>
          </TaskButton>
          <TaskButton $w={30} aria-label="展开"><svg width="16" height="10" viewBox="0 0 16 10"><path d="M1 9l7-7 7 7" fill="none" stroke="#fff" strokeWidth="1.500" /></svg></TaskButton>
          <TaskButton $w={30} aria-label="微信消息"><svg width="20" height="20" viewBox="0 0 30 30">{wechat}</svg></TaskButton>
          <TaskButton $w={30} aria-label="电源"><svg width="20" height="16" viewBox="0 0 20 16"><path d="M5 4h13v9H5zM19 6v5M1 1v4M4 1v4M0 5h5v3H2v5h3" fill="none" stroke="#fff" strokeWidth="1.300" /><path d="M7 6h9v5H7z" fill="#fff" /></svg></TaskButton>
          <TaskButton $w={30} aria-label="网络"><svg width="20" height="18" viewBox="0 0 20 18"><path d="M6 2h13v11H3V9M7 17h9M11 13v4M0 1h5v5H0zM2 6v4" fill="none" stroke="#fff" strokeWidth="1.300" /></svg></TaskButton>
          <TaskButton $w={30} aria-label="音量"><svg width="20" height="16" viewBox="0 0 20 16"><path d="M0 5h3l4-4v14l-4-4H0zM10 5q2 3 0 6M13 3q4 5 0 10M16 1q5 7 0 14" fill="none" stroke="#fff" strokeWidth="1.200" /></svg></TaskButton>
          <TaskButton $w={30}><Ime>中</Ime></TaskButton>
          <TaskButton $w={35}><Pinyin>拼</Pinyin></TaskButton>
          <Clock>11:04<br />2020-08-01</Clock>
          <TaskButton $w={40} aria-label="通知中心">
            <svg width="30" height="32" viewBox="0 0 30 32">
              <path d="M1 2h20v17H11l-4 4v-4H1z" fill="#fff" /><path d="M4 7h14M4 11h14M4 15h9" stroke="#222" strokeWidth="1.500" />
              <circle cx="20" cy="22" r="9.500" fill="#444" stroke="#8a8a8a" />
              <text x="20" y="28" fontSize="16" fontWeight="700" fill="#fff" textAnchor="middle" fontFamily='"Liberation Sans", sans-serif'>1</text>
            </svg>
          </TaskButton>
          <ShowDesktop aria-label="显示桌面" />
        </Tray>
      </Taskbar>

      <Markers viewBox="0 0 1906 1052" preserveAspectRatio="none" aria-hidden="true">
        <g fill="#ff2211">
          <path d="M1026 99L734 254L728 250L719 267L747 266L742 264L1027 101z" />
          <path d="M1719 504L1454 376L1457 372L1438 373L1449 389L1451 385L1718 506z" />
          <path d="M1470 544L1133 814L1131 808L1124 827L1142 823L1139 820L1471 546z" />
        </g>
      </Markers>
    </Shell>
  );
}
